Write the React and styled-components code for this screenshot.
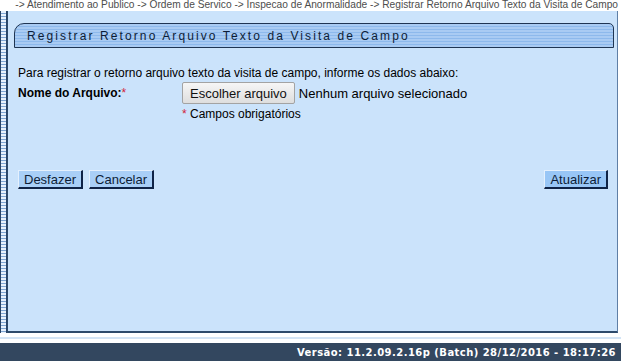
import React from "react";
import styled, { createGlobalStyle } from "styled-components";

const GlobalStyle = createGlobalStyle`
  html, body {
    margin: 0;
    padding: 0;
    background: #ffffff;
  }
  body {
    font-family: "Liberation Sans", Arial, sans-serif;
  }
`;

const Page = styled.div`
  width: 621px;
  height: 361px;
  display: flex;
  flex-direction: column;
  overflow: hidden;
`;

const Breadcrumb = styled.div`
  height: 11px;
  display: flex;
  justify-content: flex-end;
  padding-right: 3px;
  font-size: 10.2px;
  line-height: 10px;
  color: #4d4d4d;
  white-space: nowrap;
  overflow: hidden;
`;

const Middle = styled.div`
  flex: 1;
  display: flex;
  padding-right: 3px;
`;

const SideStrip = styled.div`
  width: 5px;
  border-left: 1px solid #2a4466;
  border-right: 1px solid #2a4466;
  background: repeating-linear-gradient(
    to bottom,
    #e8f2fd 0px,
    #e8f2fd 2px,
    #7fa6d4 2px,
    #7fa6d4 3px
  );
`;

const Panel = styled.div`
  flex: 1;
  background: #cbe3fb;
  border-left: 1px solid #2d4a6b;
  border-right: 1px solid #5f7fa6;
  border-bottom: 2px solid #2d4a6b;
  padding: 12px 3px 0 6px;
  display: flex;
  flex-direction: column;
`;

const TitleBar = styled.div`
  height: 23px;
  border: 1px solid #1f3553;
  border-radius: 10px 5px 0 0;
  background: repeating-linear-gradient(
    to bottom,
    #a9cbf3 0px,
    #a9cbf3 2px,
    #8db9ec 2px,
    #8db9ec 3px
  );
  display: flex;
  align-items: center;
  padding-left: 12px;
  font-size: 12px;
  letter-spacing: 2.1px;
  color: #0d1d36;
`;

const Content = styled.div`
  padding: 18px 4px 0 4px;
  font-size: 12px;
  color: #000;
`;

const Intro = styled.div`
  line-height: 14px;
`;

const FieldRow = styled.div`
  display: grid;
  grid-template-columns: 164px 1fr;
  margin-top: 2px;
  align-items: start;
`;

const Label = styled.div`
  font-weight: bold;
  padding-top: 4px;
`;

const Required = styled.span`
  color: #d2233a;
  font-weight: normal;
`;

const FileBox = styled.div`
  display: flex;
  align-items: center;
  gap: 4px;
  font-size: 13px;
`;

const FileButton = styled.div`
  height: 20px;
  padding: 0 7px;
  display: flex;
  align-items: center;
  border: 1px solid #a3a3a3;
  border-radius: 2px;
  background: linear-gradient(to bottom, #f6f6f6, #dedede);
  color: #111;
`;

const Note = styled.div`
  margin-top: 3px;
  font-size: 12px;
`;

const ButtonRow = styled.div`
  display: flex;
  justify-content: space-between;
  margin-top: 49px;
  padding-right: 2px;
`;

const ButtonGroup = styled.div`
  display: flex;
  gap: 6px;
`;

const ActionButton = styled.button`
  height: 19px;
  padding: 0 5px;
  font-family: "Liberation Sans", Arial, sans-serif;
  font-size: 13px;
  color: #0d1d36;
  background: ${(p) => (p.$primary ? "#98c6f6" : "#a9cff7")};
  border-style: solid;
  border-width: 1px 2px 2px 1px;
  border-color: #e4f0fd #0f2346 #0f2346 #e4f0fd;
  cursor: pointer;
`;

const Footer = styled.div`
  height: 28px;
  display: flex;
  flex-direction: column;
`;

const FooterGap = styled.div`
  height: 10px;
  background: linear-gradient(
    to bottom,
    #ffffff 0px,
    #ffffff 4px,
    #d3e4f5 4px,
    #d3e4f5 6px,
    #ffffff 6px
  );
`;

const FooterBar = styled.div`
  flex: 1;
  background: #33475f;
  color: #ffffff;
  font-family: Verdana, "DejaVu Sans", sans-serif;
  font-size: 10px;
  font-weight: bold;
  letter-spacing: 0.45px;
  display: flex;
  align-items: center;
  justify-content: flex-end;
  padding-right: 5px;
`;

export default function App() {
  return (
    <>
      <GlobalStyle />
      <Page>
        <Breadcrumb>
          -&gt; Atendimento ao Publico -&gt; Ordem de Servico -&gt; Inspecao de
          Anormalidade -&gt; Registrar Retorno Arquivo Texto da Visita de Campo
        </Breadcrumb>
        <Middle>
          <SideStrip />
          <Panel>
            <TitleBar>Registrar Retorno Arquivo Texto da Visita de Campo</TitleBar>
            <Content>
              <Intro>
                Para registrar o retorno arquivo texto da visita de campo,
                informe os dados abaixo:
              </Intro>
              <FieldRow>
                <Label>
                  Nome do Arquivo:<Required>*</Required>
                </Label>
                <div>
                  <FileBox>
                    <FileButton>Escolher arquivo</FileButton>
                    <span>Nenhum arquivo selecionado</span>
                  </FileBox>
                  <Note>
                    <Required>*</Required> Campos obrigatórios
                  </Note>
                </div>
              </FieldRow>
              <ButtonRow>
                <ButtonGroup>
                  <ActionButton>Desfazer</ActionButton>
                  <ActionButton>Cancelar</ActionButton>
                </ButtonGroup>
                <ActionButton $primary>Atualizar</ActionButton>
              </ButtonRow>
            </Content>
          </Panel>
        </Middle>
        <Footer>
          <FooterGap />
          <FooterBar>Versão: 11.2.09.2.16p (Batch) 28/12/2016 - 18:17:26</FooterBar>
        </Footer>
      </Page>
    </>
  );
}
